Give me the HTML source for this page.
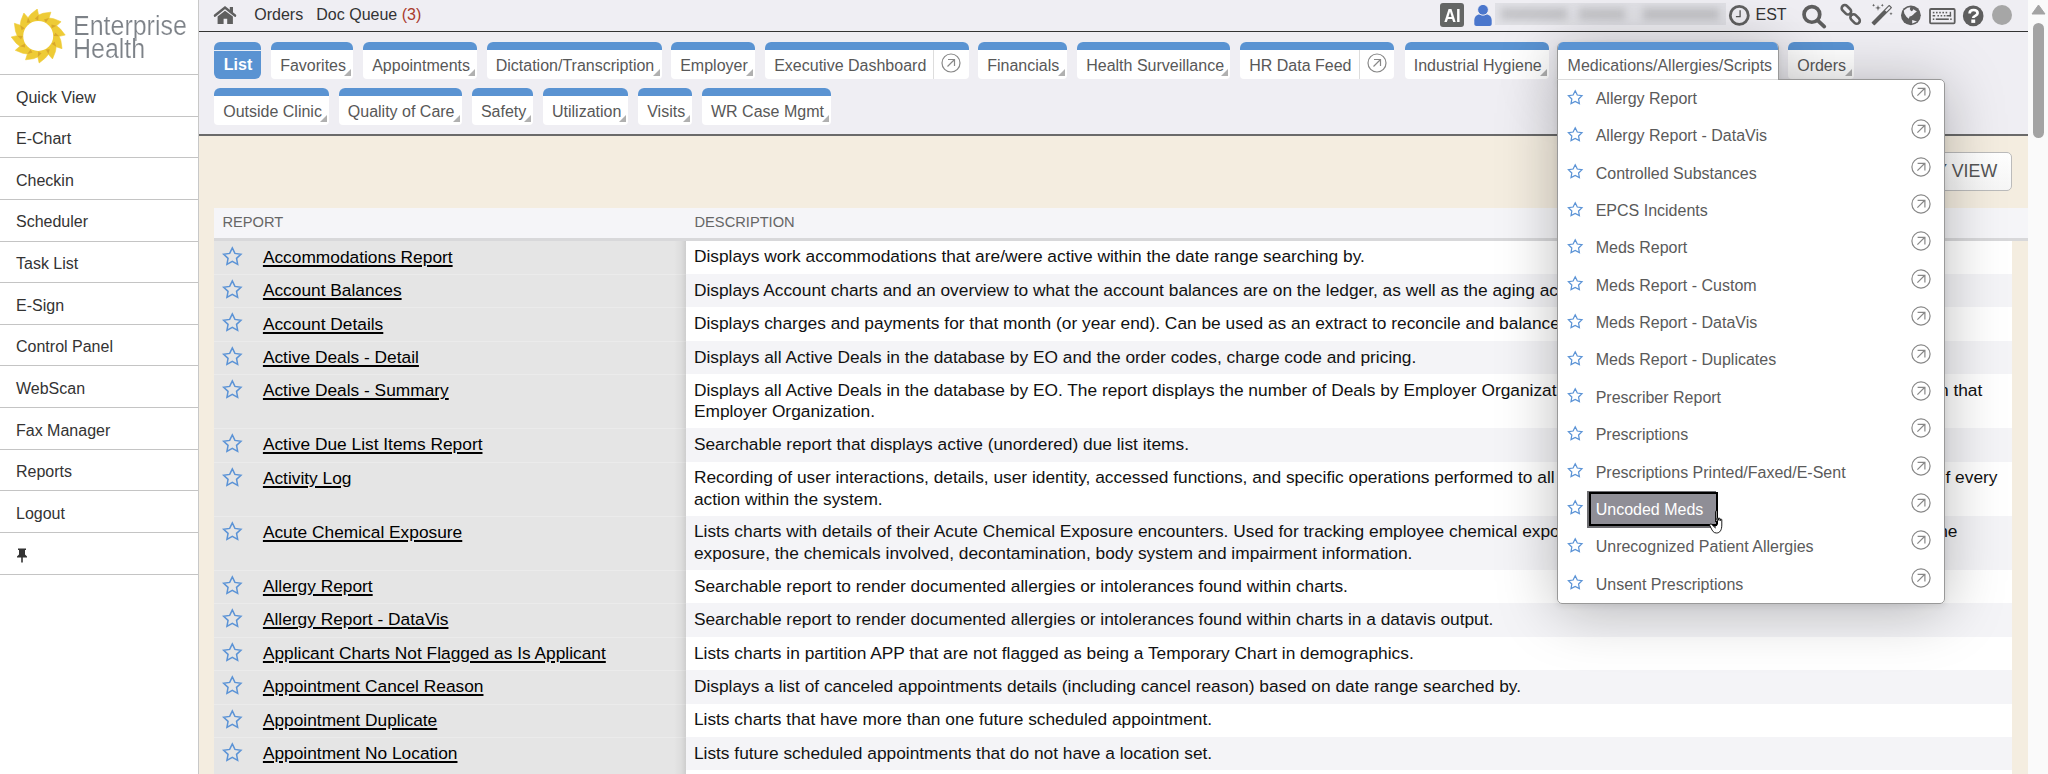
<!DOCTYPE html><html><head><meta charset="utf-8"><style>
*{box-sizing:border-box}
html,body{margin:0;padding:0}
body{width:2048px;height:774px;overflow:hidden;position:relative;font-family:"Liberation Sans", sans-serif;background:#f4ede0}
.a{position:absolute}
.t{position:absolute;white-space:nowrap;line-height:1}
</style></head><body><div class="a" style="left:199px;top:136px;width:1829px;height:638px;background:#f4ede0"></div>
<div class="a" style="left:199px;top:0;width:1829px;height:136px;background:#efeef3"></div>
<div class="a" style="left:199px;top:30.6px;width:1829px;height:1.8px;background:#333"></div>
<div class="a" style="left:199px;top:134.2px;width:1829px;height:1.5px;background:#6a6a6a"></div>
<div class="a" style="left:0;top:0;width:198px;height:774px;background:#fff"></div>
<div class="a" style="left:198px;top:0;width:1px;height:774px;background:#c8c8c8"></div>
<div class="a" style="left:0;top:74px;width:198px;height:1px;background:#c4c4c4"></div>
<div class="a" style="left:0;top:116px;width:198px;height:1px;background:#c4c4c4"></div>
<div class="a" style="left:0;top:157px;width:198px;height:1px;background:#c4c4c4"></div>
<div class="a" style="left:0;top:199px;width:198px;height:1px;background:#c4c4c4"></div>
<div class="a" style="left:0;top:241px;width:198px;height:1px;background:#c4c4c4"></div>
<div class="a" style="left:0;top:282px;width:198px;height:1px;background:#c4c4c4"></div>
<div class="a" style="left:0;top:324px;width:198px;height:1px;background:#c4c4c4"></div>
<div class="a" style="left:0;top:365px;width:198px;height:1px;background:#c4c4c4"></div>
<div class="a" style="left:0;top:407px;width:198px;height:1px;background:#c4c4c4"></div>
<div class="a" style="left:0;top:449px;width:198px;height:1px;background:#c4c4c4"></div>
<div class="a" style="left:0;top:490px;width:198px;height:1px;background:#c4c4c4"></div>
<div class="a" style="left:0;top:532px;width:198px;height:1px;background:#c4c4c4"></div>
<div class="a" style="left:0;top:574px;width:198px;height:1px;background:#c4c4c4"></div>
<div class="t" style="left:16px;top:89.56px;font-size:16px;color:#333;font-weight:400;">Quick View</div>
<div class="t" style="left:16px;top:131.20px;font-size:16px;color:#333;font-weight:400;">E-Chart</div>
<div class="t" style="left:16px;top:172.84px;font-size:16px;color:#333;font-weight:400;">Checkin</div>
<div class="t" style="left:16px;top:214.48px;font-size:16px;color:#333;font-weight:400;">Scheduler</div>
<div class="t" style="left:16px;top:256.12px;font-size:16px;color:#333;font-weight:400;">Task List</div>
<div class="t" style="left:16px;top:297.76px;font-size:16px;color:#333;font-weight:400;">E-Sign</div>
<div class="t" style="left:16px;top:339.40px;font-size:16px;color:#333;font-weight:400;">Control Panel</div>
<div class="t" style="left:16px;top:381.04px;font-size:16px;color:#333;font-weight:400;">WebScan</div>
<div class="t" style="left:16px;top:422.68px;font-size:16px;color:#333;font-weight:400;">Fax Manager</div>
<div class="t" style="left:16px;top:464.32px;font-size:16px;color:#333;font-weight:400;">Reports</div>
<div class="t" style="left:16px;top:505.96px;font-size:16px;color:#333;font-weight:400;">Logout</div>
<div class="a" style="left:214px;top:42px;width:47px;height:36.5px;background:#5a93d2;border-radius:6px"></div>
<div class="a" style="left:214px;top:50px;width:47px;height:1.3px;background:#e8eef6"></div>
<div class="t" style="left:223.8px;top:57.26px;font-size:16px;color:#fff;font-weight:700;">List</div>
<div class="a" style="left:271px;top:42px;width:82px;height:36.5px;background:#fff;border-radius:6px 6px 4px 4px;overflow:hidden"><div class="a" style="left:0;top:0;width:100%;height:8px;background:#5a93d2"></div></div>
<div class="t" style="left:280.2px;top:57.66px;font-size:16px;color:#585858;font-weight:400;">Favorites</div>
<svg class="a" style="left:344px;top:69px" width="7" height="7" viewBox="0 0 7 7"><path d="M7 0V7H0Z" fill="#b0b0b0"/></svg>
<div class="a" style="left:363px;top:42px;width:114px;height:36.5px;background:#fff;border-radius:6px 6px 4px 4px;overflow:hidden"><div class="a" style="left:0;top:0;width:100%;height:8px;background:#5a93d2"></div></div>
<div class="t" style="left:372.2px;top:57.66px;font-size:16px;color:#585858;font-weight:400;">Appointments</div>
<svg class="a" style="left:468px;top:69px" width="7" height="7" viewBox="0 0 7 7"><path d="M7 0V7H0Z" fill="#b0b0b0"/></svg>
<div class="a" style="left:486.5px;top:42px;width:175.5px;height:36.5px;background:#fff;border-radius:6px 6px 4px 4px;overflow:hidden"><div class="a" style="left:0;top:0;width:100%;height:8px;background:#5a93d2"></div></div>
<div class="t" style="left:495.7px;top:57.66px;font-size:16px;color:#585858;font-weight:400;">Dictation/Transcription</div>
<svg class="a" style="left:653.0px;top:69px" width="7" height="7" viewBox="0 0 7 7"><path d="M7 0V7H0Z" fill="#b0b0b0"/></svg>
<div class="a" style="left:671px;top:42px;width:83.6px;height:36.5px;background:#fff;border-radius:6px 6px 4px 4px;overflow:hidden"><div class="a" style="left:0;top:0;width:100%;height:8px;background:#5a93d2"></div></div>
<div class="t" style="left:680.2px;top:57.66px;font-size:16px;color:#585858;font-weight:400;">Employer</div>
<svg class="a" style="left:745.6px;top:69px" width="7" height="7" viewBox="0 0 7 7"><path d="M7 0V7H0Z" fill="#b0b0b0"/></svg>
<div class="a" style="left:765px;top:42px;width:204px;height:36.5px;background:#fff;border-radius:6px 6px 4px 4px;overflow:hidden"><div class="a" style="left:0;top:0;width:100%;height:8px;background:#5a93d2"></div></div>
<div class="t" style="left:774.2px;top:57.66px;font-size:16px;color:#585858;font-weight:400;">Executive Dashboard</div>
<div class="a" style="left:933px;top:50px;width:1px;height:28.5px;background:#ddd"></div>
<svg class="a" style="left:941px;top:53.3px" width="20" height="20" viewBox="0 0 20 20"><circle cx="10" cy="10" r="9" fill="none" stroke="#888" stroke-width="1.2"/><path d="M6.5 13.5L13.5 6.5M7 6.5H13.5V13" fill="none" stroke="#888" stroke-width="1.2"/></svg>
<div class="a" style="left:978px;top:42px;width:89px;height:36.5px;background:#fff;border-radius:6px 6px 4px 4px;overflow:hidden"><div class="a" style="left:0;top:0;width:100%;height:8px;background:#5a93d2"></div></div>
<div class="t" style="left:987.2px;top:57.66px;font-size:16px;color:#585858;font-weight:400;">Financials</div>
<svg class="a" style="left:1058px;top:69px" width="7" height="7" viewBox="0 0 7 7"><path d="M7 0V7H0Z" fill="#b0b0b0"/></svg>
<div class="a" style="left:1077px;top:42px;width:153px;height:36.5px;background:#fff;border-radius:6px 6px 4px 4px;overflow:hidden"><div class="a" style="left:0;top:0;width:100%;height:8px;background:#5a93d2"></div></div>
<div class="t" style="left:1086.2px;top:57.66px;font-size:16px;color:#585858;font-weight:400;">Health Surveillance</div>
<svg class="a" style="left:1221px;top:69px" width="7" height="7" viewBox="0 0 7 7"><path d="M7 0V7H0Z" fill="#b0b0b0"/></svg>
<div class="a" style="left:1240px;top:42px;width:154px;height:36.5px;background:#fff;border-radius:6px 6px 4px 4px;overflow:hidden"><div class="a" style="left:0;top:0;width:100%;height:8px;background:#5a93d2"></div></div>
<div class="t" style="left:1249.2px;top:57.66px;font-size:16px;color:#585858;font-weight:400;">HR Data Feed</div>
<div class="a" style="left:1359px;top:50px;width:1px;height:28.5px;background:#ddd"></div>
<svg class="a" style="left:1367px;top:53.3px" width="20" height="20" viewBox="0 0 20 20"><circle cx="10" cy="10" r="9" fill="none" stroke="#888" stroke-width="1.2"/><path d="M6.5 13.5L13.5 6.5M7 6.5H13.5V13" fill="none" stroke="#888" stroke-width="1.2"/></svg>
<div class="a" style="left:1404.5px;top:42px;width:144.5px;height:36.5px;background:#fff;border-radius:6px 6px 4px 4px;overflow:hidden"><div class="a" style="left:0;top:0;width:100%;height:8px;background:#5a93d2"></div></div>
<div class="t" style="left:1413.7px;top:57.66px;font-size:16px;color:#585858;font-weight:400;">Industrial Hygiene</div>
<svg class="a" style="left:1540.0px;top:69px" width="7" height="7" viewBox="0 0 7 7"><path d="M7 0V7H0Z" fill="#b0b0b0"/></svg>
<div class="a" style="left:1788px;top:42px;width:66px;height:36.5px;background:#fff;border-radius:6px 6px 4px 4px;overflow:hidden"><div class="a" style="left:0;top:0;width:100%;height:8px;background:#5a93d2"></div></div>
<div class="t" style="left:1797.2px;top:57.66px;font-size:16px;color:#585858;font-weight:400;">Orders</div>
<svg class="a" style="left:1845px;top:69px" width="7" height="7" viewBox="0 0 7 7"><path d="M7 0V7H0Z" fill="#b0b0b0"/></svg>
<div class="a" style="left:214px;top:88px;width:115px;height:36.5px;background:#fff;border-radius:6px 6px 4px 4px;overflow:hidden"><div class="a" style="left:0;top:0;width:100%;height:8px;background:#5a93d2"></div></div>
<div class="t" style="left:223.2px;top:103.66px;font-size:16px;color:#585858;font-weight:400;">Outside Clinic</div>
<svg class="a" style="left:320px;top:115px" width="7" height="7" viewBox="0 0 7 7"><path d="M7 0V7H0Z" fill="#b0b0b0"/></svg>
<div class="a" style="left:338.6px;top:88px;width:123.4px;height:36.5px;background:#fff;border-radius:6px 6px 4px 4px;overflow:hidden"><div class="a" style="left:0;top:0;width:100%;height:8px;background:#5a93d2"></div></div>
<div class="t" style="left:347.8px;top:103.66px;font-size:16px;color:#585858;font-weight:400;">Quality of Care</div>
<svg class="a" style="left:453.0px;top:115px" width="7" height="7" viewBox="0 0 7 7"><path d="M7 0V7H0Z" fill="#b0b0b0"/></svg>
<div class="a" style="left:471.7px;top:88px;width:61.2px;height:36.5px;background:#fff;border-radius:6px 6px 4px 4px;overflow:hidden"><div class="a" style="left:0;top:0;width:100%;height:8px;background:#5a93d2"></div></div>
<div class="t" style="left:480.9px;top:103.66px;font-size:16px;color:#585858;font-weight:400;">Safety</div>
<svg class="a" style="left:523.9px;top:115px" width="7" height="7" viewBox="0 0 7 7"><path d="M7 0V7H0Z" fill="#b0b0b0"/></svg>
<div class="a" style="left:542.8px;top:88px;width:85.2px;height:36.5px;background:#fff;border-radius:6px 6px 4px 4px;overflow:hidden"><div class="a" style="left:0;top:0;width:100%;height:8px;background:#5a93d2"></div></div>
<div class="t" style="left:552.0px;top:103.66px;font-size:16px;color:#585858;font-weight:400;">Utilization</div>
<svg class="a" style="left:619.0px;top:115px" width="7" height="7" viewBox="0 0 7 7"><path d="M7 0V7H0Z" fill="#b0b0b0"/></svg>
<div class="a" style="left:638px;top:88px;width:54px;height:36.5px;background:#fff;border-radius:6px 6px 4px 4px;overflow:hidden"><div class="a" style="left:0;top:0;width:100%;height:8px;background:#5a93d2"></div></div>
<div class="t" style="left:647.2px;top:103.66px;font-size:16px;color:#585858;font-weight:400;">Visits</div>
<svg class="a" style="left:683px;top:115px" width="7" height="7" viewBox="0 0 7 7"><path d="M7 0V7H0Z" fill="#b0b0b0"/></svg>
<div class="a" style="left:701.8px;top:88px;width:129.3px;height:36.5px;background:#fff;border-radius:6px 6px 4px 4px;overflow:hidden"><div class="a" style="left:0;top:0;width:100%;height:8px;background:#5a93d2"></div></div>
<div class="t" style="left:711.0px;top:103.66px;font-size:16px;color:#585858;font-weight:400;">WR Case Mgmt</div>
<svg class="a" style="left:822.0999999999999px;top:115px" width="7" height="7" viewBox="0 0 7 7"><path d="M7 0V7H0Z" fill="#b0b0b0"/></svg>
<svg class="a" style="left:208px;top:2px" width="34" height="28" viewBox="0 0 34 28"><path d="M7 13.6L17 5.6L27 13.6" fill="none" stroke="#5f5f5f" stroke-width="2.5" stroke-linecap="round" stroke-linejoin="miter"/><rect x="21.8" y="5" width="3.2" height="6" fill="#5f5f5f"/><path d="M9.6 14.6L17 8.8L24.9 14.6V21.9H19.2V16.8H15.6V21.9H9.6Z" fill="#5f5f5f"/></svg>
<div class="t" style="left:254.3px;top:7.46px;font-size:16px;color:#333;font-weight:400;">Orders</div>
<div class="t" style="left:316.3px;top:7.46px;font-size:16px;color:#333;font-weight:400;">Doc Queue <span style="color:#a93a2c">(3)</span></div>
<div class="a" style="left:1440px;top:3px;width:24.3px;height:24px;background:#646665;border-radius:3px"></div>
<div class="t" style="left:1443.6px;top:6.54px;font-size:18.5px;color:#fff;font-weight:700;transform:scaleX(0.9);transform-origin:0 0">AI</div>
<svg class="a" style="left:1474px;top:4px" width="18" height="23" viewBox="0 0 18 23"><path d="M0.3 20V16.5C0.3 12.8 2.8 10.5 5.5 10.5H12.5C15.2 10.5 17.7 12.8 17.7 16.5V20C17.7 21.3 16.8 22 15.6 22H2.4C1.2 22 0.3 21.3 0.3 20Z" fill="#4a76cc"/><circle cx="9" cy="5.8" r="5.4" fill="#4a76cc" stroke="#efeef3" stroke-width="1"/></svg>
<div class="a" style="left:1495px;top:3px;width:231px;height:22px;background:#e1e1e6;overflow:hidden"><div class="a" style="left:6px;top:5px;width:66px;height:12px;background:#c4c4c8;filter:blur(3.5px)"></div><div class="a" style="left:84px;top:5px;width:46px;height:12px;background:#c6c6ca;filter:blur(3.5px)"></div><div class="a" style="left:148px;top:5px;width:76px;height:12px;background:#c4c4c8;filter:blur(3.5px)"></div></div>
<svg class="a" style="left:1728px;top:4px" width="23" height="23" viewBox="0 0 23 23"><circle cx="11.3" cy="11.4" r="9" fill="none" stroke="#606060" stroke-width="2.8"/><path d="M12.1 6.3V12.6H7.9" fill="none" stroke="#555" stroke-width="1.3"/></svg>
<div class="t" style="left:1755.5px;top:7.26px;font-size:16px;color:#333;font-weight:400;">EST</div>
<svg class="a" style="left:1800px;top:2px" width="28" height="28" viewBox="0 0 28 28"><circle cx="11.9" cy="12.4" r="7.85" fill="none" stroke="#5e5e5e" stroke-width="3.7"/><path d="M18.2 18.8L24.3 24.6" stroke="#5e5e5e" stroke-width="3.7" stroke-linecap="round"/></svg>
<svg class="a" style="left:1838px;top:2px" width="26" height="26" viewBox="0 0 26 26"><g fill="none" stroke="#5e5e5e" stroke-width="2.6"><rect x="-5.4" y="-3.1" width="10.8" height="6.2" rx="3.1" transform="translate(8.4 7.8) rotate(45)"/><rect x="-5.4" y="-3.1" width="10.8" height="6.2" rx="3.1" transform="translate(17.1 17.0) rotate(45)"/></g><path d="M11.3 11.1L14.2 14" stroke="#5e5e5e" stroke-width="2.8"/></svg>
<svg class="a" style="left:1869px;top:2px" width="26" height="26" viewBox="0 0 26 26"><g transform="translate(12.8 13.1) rotate(-45)"><rect x="-12.6" y="-2.1" width="25.2" height="4.2" rx="0.5" fill="#5e5e5e"/><rect x="5.6" y="-1" width="5.8" height="2" fill="#efeef3"/></g><path d="M9 2.9000000000000004L9.7 5.2L12.0 5.9L9.7 6.6000000000000005L9 8.9L8.3 6.6000000000000005L6.0 5.9L8.3 5.2ZM4.6 1.7000000000000002L5.05 2.75L6.1 3.2L5.05 3.6500000000000004L4.6 4.7L4.1499999999999995 3.6500000000000004L3.0999999999999996 3.2L4.1499999999999995 2.75ZM13.3 1.7000000000000002L13.75 2.75L14.8 3.2L13.75 3.6500000000000004L13.3 4.7L12.850000000000001 3.6500000000000004L11.8 3.2L12.850000000000001 2.75ZM22 10.1L22.45 11.25L23.6 11.7L22.45 12.149999999999999L22 13.299999999999999L21.55 12.149999999999999L20.4 11.7L21.55 11.25Z" fill="#5e5e5e"/></svg>
<svg class="a" style="left:1898px;top:3px" width="26" height="26" viewBox="0 0 26 26"><circle cx="12.9" cy="12.3" r="9.9" fill="#5e5e5e"/><path d="M5.8 7.4L9.5 4.8L12.3 4.3L11.8 6.2L14 8.1L15.4 6.3L18.9 8.4L16.8 10.1L15.1 11.7L13.4 12.9L11.6 13.4L10.8 15.8L8.6 13.9L6.3 10.6Z" fill="#efeef3"/><path d="M12 6.4L13.9 6.2L14.6 7.8L13.2 8.2Z" fill="#5e5e5e"/><path d="M14.2 17.1L19 18.4L14.2 20.6Z" fill="#efeef3"/></svg>
<svg class="a" style="left:1929px;top:8px" width="27" height="17" viewBox="0 0 27 17"><rect x="1" y="1" width="24.7" height="14.3" rx="1" fill="none" stroke="#5e5e5e" stroke-width="1.8"/><g fill="#5e5e5e"><rect x="3.8" y="3.8" width="1.6" height="1.6"/><rect x="7" y="3.8" width="1.6" height="1.6"/><rect x="10.2" y="3.8" width="1.6" height="1.6"/><rect x="13.4" y="3.8" width="1.6" height="1.6"/><rect x="16.6" y="3.8" width="1.6" height="1.6"/><rect x="20.7" y="3.8" width="1.4" height="4.6"/><rect x="3.6" y="7" width="2.6" height="1.5"/><rect x="8.4" y="7" width="1.6" height="1.5"/><rect x="11.6" y="7" width="1.6" height="1.5"/><rect x="14.8" y="7" width="1.6" height="1.5"/><rect x="17.6" y="7" width="4.5" height="1.5"/><rect x="3.8" y="10.4" width="1.5" height="1.6"/><rect x="6.8" y="10.4" width="13" height="1.6"/><rect x="21.2" y="10.4" width="1.5" height="1.6"/></g></svg>
<svg class="a" style="left:1962px;top:4.5px" width="22" height="22" viewBox="0 0 22 22"><circle cx="11.2" cy="10.9" r="10.3" fill="#5e5e5e"/><path d="M7.6 8.5C7.6 6 9.5 5 11.6 5C13.8 5 15.6 6.2 15.6 8.3C15.6 10.7 11.2 10.9 11.2 12.9V13.1" fill="none" stroke="#fff" stroke-width="2.7"/><rect x="9.3" y="14.5" width="3.9" height="3.4" fill="#fff"/></svg>
<div class="a" style="left:1991.7px;top:5.2px;width:20.2px;height:20.2px;border-radius:50%;background:#a6a6a6"></div>
<div class="a" style="left:1880px;top:152px;width:132px;height:38.5px;border:1px solid #bbb;border-radius:5px;background:linear-gradient(#fff,#f6f6f6)"></div>
<div class="t" style="right:50.8px;top:162.6px;font-size:17.8px;color:#555">MY VIEW</div>
<div class="a" style="left:214px;top:208px;width:1814px;height:30px;background:#f5f5f8"></div>
<div class="a" style="left:214px;top:237.8px;width:1814px;height:2.8px;background:#d8d8da"></div>
<div class="t" style="left:222.4px;top:215.28px;font-size:14.67px;color:#666;font-weight:400;">REPORT</div>
<div class="t" style="left:694.5px;top:215.28px;font-size:14.67px;color:#666;font-weight:400;">DESCRIPTION</div>
<div class="a" style="left:214px;top:240.6px;width:472px;height:534px;background:#e5e5e5"></div>
<div class="a" style="left:686px;top:240.6px;width:1326px;height:534px;background:#fff"></div>
<svg class="a" style="left:219.5px;top:242.60px" width="26" height="24" viewBox="0 0 26 24"><path d="M12.30 4.90L14.92 10.39L20.95 11.19L16.54 15.38L17.65 21.36L12.30 18.46L6.95 21.36L8.06 15.38L3.65 11.19L9.68 10.39Z" fill="none" stroke="#5b93d6" stroke-width="1.5" stroke-linejoin="miter" stroke-miterlimit="10"/></svg>
<div class="t" style="left:262.9px;top:248.73px;font-size:17.33px;color:#000;font-weight:400;text-decoration:underline;text-decoration-thickness:1.6px;text-underline-offset:1.6px">Accommodations Report</div>
<div class="t" style="left:693.9px;top:248.43px;font-size:17.33px;color:#111;font-weight:400;">Displays work accommodations that are/were active within the date range searching by.</div>
<div class="a" style="left:214px;top:274px;width:472px;height:1px;background:#ebebeb"></div>
<div class="a" style="left:686px;top:274.02px;width:1326px;height:33.42px;background:#f4f4f7"></div>
<svg class="a" style="left:219.5px;top:276.02px" width="26" height="24" viewBox="0 0 26 24"><path d="M12.30 4.90L14.92 10.39L20.95 11.19L16.54 15.38L17.65 21.36L12.30 18.46L6.95 21.36L8.06 15.38L3.65 11.19L9.68 10.39Z" fill="none" stroke="#5b93d6" stroke-width="1.5" stroke-linejoin="miter" stroke-miterlimit="10"/></svg>
<div class="t" style="left:262.9px;top:282.15px;font-size:17.33px;color:#000;font-weight:400;text-decoration:underline;text-decoration-thickness:1.6px;text-underline-offset:1.6px">Account Balances</div>
<div class="t" style="left:693.9px;top:281.85px;font-size:17.33px;color:#111;font-weight:400;">Displays Account charts and an overview to what the account balances are on the ledger, as well as the aging account</div>
<div class="a" style="left:214px;top:307px;width:472px;height:1px;background:#ebebeb"></div>
<svg class="a" style="left:219.5px;top:309.44px" width="26" height="24" viewBox="0 0 26 24"><path d="M12.30 4.90L14.92 10.39L20.95 11.19L16.54 15.38L17.65 21.36L12.30 18.46L6.95 21.36L8.06 15.38L3.65 11.19L9.68 10.39Z" fill="none" stroke="#5b93d6" stroke-width="1.5" stroke-linejoin="miter" stroke-miterlimit="10"/></svg>
<div class="t" style="left:262.9px;top:315.57px;font-size:17.33px;color:#000;font-weight:400;text-decoration:underline;text-decoration-thickness:1.6px;text-underline-offset:1.6px">Account Details</div>
<div class="t" style="left:693.9px;top:315.27px;font-size:17.33px;color:#111;font-weight:400;">Displays charges and payments for that month (or year end). Can be used as an extract to reconcile and balance the</div>
<div class="a" style="left:214px;top:341px;width:472px;height:1px;background:#ebebeb"></div>
<div class="a" style="left:686px;top:340.86px;width:1326px;height:33.42px;background:#f4f4f7"></div>
<svg class="a" style="left:219.5px;top:342.86px" width="26" height="24" viewBox="0 0 26 24"><path d="M12.30 4.90L14.92 10.39L20.95 11.19L16.54 15.38L17.65 21.36L12.30 18.46L6.95 21.36L8.06 15.38L3.65 11.19L9.68 10.39Z" fill="none" stroke="#5b93d6" stroke-width="1.5" stroke-linejoin="miter" stroke-miterlimit="10"/></svg>
<div class="t" style="left:262.9px;top:348.99px;font-size:17.33px;color:#000;font-weight:400;text-decoration:underline;text-decoration-thickness:1.6px;text-underline-offset:1.6px">Active Deals - Detail</div>
<div class="t" style="left:693.9px;top:348.69px;font-size:17.33px;color:#111;font-weight:400;">Displays all Active Deals in the database by EO and the order codes, charge code and pricing.</div>
<div class="a" style="left:214px;top:374px;width:472px;height:1px;background:#ebebeb"></div>
<svg class="a" style="left:219.5px;top:376.28px" width="26" height="24" viewBox="0 0 26 24"><path d="M12.30 4.90L14.92 10.39L20.95 11.19L16.54 15.38L17.65 21.36L12.30 18.46L6.95 21.36L8.06 15.38L3.65 11.19L9.68 10.39Z" fill="none" stroke="#5b93d6" stroke-width="1.5" stroke-linejoin="miter" stroke-miterlimit="10"/></svg>
<div class="t" style="left:262.9px;top:382.41px;font-size:17.33px;color:#000;font-weight:400;text-decoration:underline;text-decoration-thickness:1.6px;text-underline-offset:1.6px">Active Deals - Summary</div>
<div class="t" style="left:693.9px;top:381.51px;font-size:17.33px;color:#111;font-weight:400;">Displays all Active Deals in the database by EO. The report displays the number of Deals by Employer Organization</div>
<div class="t" style="left:693.9px;top:403.21px;font-size:17.33px;color:#111;font-weight:400;">Employer Organization.</div>
<div class="t" style="right:65.70000000000005px;top:381.51px;font-size:17.33px;color:#111">n that</div>
<div class="a" style="left:214px;top:428px;width:472px;height:1px;background:#ebebeb"></div>
<div class="a" style="left:686px;top:428.33px;width:1326px;height:33.42px;background:#f4f4f7"></div>
<svg class="a" style="left:219.5px;top:430.33px" width="26" height="24" viewBox="0 0 26 24"><path d="M12.30 4.90L14.92 10.39L20.95 11.19L16.54 15.38L17.65 21.36L12.30 18.46L6.95 21.36L8.06 15.38L3.65 11.19L9.68 10.39Z" fill="none" stroke="#5b93d6" stroke-width="1.5" stroke-linejoin="miter" stroke-miterlimit="10"/></svg>
<div class="t" style="left:262.9px;top:436.46px;font-size:17.33px;color:#000;font-weight:400;text-decoration:underline;text-decoration-thickness:1.6px;text-underline-offset:1.6px">Active Due List Items Report</div>
<div class="t" style="left:693.9px;top:436.16px;font-size:17.33px;color:#111;font-weight:400;">Searchable report that displays active (unordered) due list items.</div>
<div class="a" style="left:214px;top:462px;width:472px;height:1px;background:#ebebeb"></div>
<svg class="a" style="left:219.5px;top:463.75px" width="26" height="24" viewBox="0 0 26 24"><path d="M12.30 4.90L14.92 10.39L20.95 11.19L16.54 15.38L17.65 21.36L12.30 18.46L6.95 21.36L8.06 15.38L3.65 11.19L9.68 10.39Z" fill="none" stroke="#5b93d6" stroke-width="1.5" stroke-linejoin="miter" stroke-miterlimit="10"/></svg>
<div class="t" style="left:262.9px;top:469.88px;font-size:17.33px;color:#000;font-weight:400;text-decoration:underline;text-decoration-thickness:1.6px;text-underline-offset:1.6px">Activity Log</div>
<div class="t" style="left:693.9px;top:468.98px;font-size:17.33px;color:#111;font-weight:400;">Recording of user interactions, details, user identity, accessed functions, and specific operations performed to all</div>
<div class="t" style="left:693.9px;top:490.68px;font-size:17.33px;color:#111;font-weight:400;">action within the system.</div>
<div class="t" style="right:50.5px;top:468.98px;font-size:17.33px;color:#111">f every</div>
<div class="a" style="left:214px;top:516px;width:472px;height:1px;background:#ebebeb"></div>
<div class="a" style="left:686px;top:515.80px;width:1326px;height:54.05px;background:#f4f4f7"></div>
<svg class="a" style="left:219.5px;top:517.80px" width="26" height="24" viewBox="0 0 26 24"><path d="M12.30 4.90L14.92 10.39L20.95 11.19L16.54 15.38L17.65 21.36L12.30 18.46L6.95 21.36L8.06 15.38L3.65 11.19L9.68 10.39Z" fill="none" stroke="#5b93d6" stroke-width="1.5" stroke-linejoin="miter" stroke-miterlimit="10"/></svg>
<div class="t" style="left:262.9px;top:523.93px;font-size:17.33px;color:#000;font-weight:400;text-decoration:underline;text-decoration-thickness:1.6px;text-underline-offset:1.6px">Acute Chemical Exposure</div>
<div class="t" style="left:693.9px;top:523.03px;font-size:17.33px;color:#111;font-weight:400;">Lists charts with details of their Acute Chemical Exposure encounters. Used for tracking employee chemical exposure</div>
<div class="t" style="left:693.9px;top:544.73px;font-size:17.33px;color:#111;font-weight:400;">exposure, the chemicals involved, decontamination, body system and impairment information.</div>
<div class="t" style="right:90.5px;top:523.03px;font-size:17.33px;color:#111">ne</div>
<div class="a" style="left:214px;top:570px;width:472px;height:1px;background:#ebebeb"></div>
<svg class="a" style="left:219.5px;top:571.85px" width="26" height="24" viewBox="0 0 26 24"><path d="M12.30 4.90L14.92 10.39L20.95 11.19L16.54 15.38L17.65 21.36L12.30 18.46L6.95 21.36L8.06 15.38L3.65 11.19L9.68 10.39Z" fill="none" stroke="#5b93d6" stroke-width="1.5" stroke-linejoin="miter" stroke-miterlimit="10"/></svg>
<div class="t" style="left:262.9px;top:577.98px;font-size:17.33px;color:#000;font-weight:400;text-decoration:underline;text-decoration-thickness:1.6px;text-underline-offset:1.6px">Allergy Report</div>
<div class="t" style="left:693.9px;top:577.68px;font-size:17.33px;color:#111;font-weight:400;">Searchable report to render documented allergies or intolerances found within charts.</div>
<div class="a" style="left:214px;top:603px;width:472px;height:1px;background:#ebebeb"></div>
<div class="a" style="left:686px;top:603.27px;width:1326px;height:33.42px;background:#f4f4f7"></div>
<svg class="a" style="left:219.5px;top:605.27px" width="26" height="24" viewBox="0 0 26 24"><path d="M12.30 4.90L14.92 10.39L20.95 11.19L16.54 15.38L17.65 21.36L12.30 18.46L6.95 21.36L8.06 15.38L3.65 11.19L9.68 10.39Z" fill="none" stroke="#5b93d6" stroke-width="1.5" stroke-linejoin="miter" stroke-miterlimit="10"/></svg>
<div class="t" style="left:262.9px;top:611.40px;font-size:17.33px;color:#000;font-weight:400;text-decoration:underline;text-decoration-thickness:1.6px;text-underline-offset:1.6px">Allergy Report - DataVis</div>
<div class="t" style="left:693.9px;top:611.10px;font-size:17.33px;color:#111;font-weight:400;">Searchable report to render documented allergies or intolerances found within charts in a datavis output.</div>
<div class="a" style="left:214px;top:637px;width:472px;height:1px;background:#ebebeb"></div>
<svg class="a" style="left:219.5px;top:638.69px" width="26" height="24" viewBox="0 0 26 24"><path d="M12.30 4.90L14.92 10.39L20.95 11.19L16.54 15.38L17.65 21.36L12.30 18.46L6.95 21.36L8.06 15.38L3.65 11.19L9.68 10.39Z" fill="none" stroke="#5b93d6" stroke-width="1.5" stroke-linejoin="miter" stroke-miterlimit="10"/></svg>
<div class="t" style="left:262.9px;top:644.82px;font-size:17.33px;color:#000;font-weight:400;text-decoration:underline;text-decoration-thickness:1.6px;text-underline-offset:1.6px">Applicant Charts Not Flagged as Is Applicant</div>
<div class="t" style="left:693.9px;top:644.52px;font-size:17.33px;color:#111;font-weight:400;">Lists charts in partition APP that are not flagged as being a Temporary Chart in demographics.</div>
<div class="a" style="left:214px;top:670px;width:472px;height:1px;background:#ebebeb"></div>
<div class="a" style="left:686px;top:670.11px;width:1326px;height:33.42px;background:#f4f4f7"></div>
<svg class="a" style="left:219.5px;top:672.11px" width="26" height="24" viewBox="0 0 26 24"><path d="M12.30 4.90L14.92 10.39L20.95 11.19L16.54 15.38L17.65 21.36L12.30 18.46L6.95 21.36L8.06 15.38L3.65 11.19L9.68 10.39Z" fill="none" stroke="#5b93d6" stroke-width="1.5" stroke-linejoin="miter" stroke-miterlimit="10"/></svg>
<div class="t" style="left:262.9px;top:678.24px;font-size:17.33px;color:#000;font-weight:400;text-decoration:underline;text-decoration-thickness:1.6px;text-underline-offset:1.6px">Appointment Cancel Reason</div>
<div class="t" style="left:693.9px;top:677.94px;font-size:17.33px;color:#111;font-weight:400;">Displays a list of canceled appointments details (including cancel reason) based on date range searched by.</div>
<div class="a" style="left:214px;top:704px;width:472px;height:1px;background:#ebebeb"></div>
<svg class="a" style="left:219.5px;top:705.53px" width="26" height="24" viewBox="0 0 26 24"><path d="M12.30 4.90L14.92 10.39L20.95 11.19L16.54 15.38L17.65 21.36L12.30 18.46L6.95 21.36L8.06 15.38L3.65 11.19L9.68 10.39Z" fill="none" stroke="#5b93d6" stroke-width="1.5" stroke-linejoin="miter" stroke-miterlimit="10"/></svg>
<div class="t" style="left:262.9px;top:711.66px;font-size:17.33px;color:#000;font-weight:400;text-decoration:underline;text-decoration-thickness:1.6px;text-underline-offset:1.6px">Appointment Duplicate</div>
<div class="t" style="left:693.9px;top:711.36px;font-size:17.33px;color:#111;font-weight:400;">Lists charts that have more than one future scheduled appointment.</div>
<div class="a" style="left:214px;top:737px;width:472px;height:1px;background:#ebebeb"></div>
<div class="a" style="left:686px;top:736.95px;width:1326px;height:33.42px;background:#f4f4f7"></div>
<svg class="a" style="left:219.5px;top:738.95px" width="26" height="24" viewBox="0 0 26 24"><path d="M12.30 4.90L14.92 10.39L20.95 11.19L16.54 15.38L17.65 21.36L12.30 18.46L6.95 21.36L8.06 15.38L3.65 11.19L9.68 10.39Z" fill="none" stroke="#5b93d6" stroke-width="1.5" stroke-linejoin="miter" stroke-miterlimit="10"/></svg>
<div class="t" style="left:262.9px;top:745.08px;font-size:17.33px;color:#000;font-weight:400;text-decoration:underline;text-decoration-thickness:1.6px;text-underline-offset:1.6px">Appointment No Location</div>
<div class="t" style="left:693.9px;top:744.78px;font-size:17.33px;color:#111;font-weight:400;">Lists future scheduled appointments that do not have a location set.</div>
<div class="a" style="left:674px;top:240.6px;width:12px;height:534px;background:linear-gradient(90deg,rgba(0,0,0,0),rgba(0,0,0,0.035) 60%,rgba(0,0,0,0.1))"></div>
<div class="a" style="left:1557px;top:41.8px;width:222px;height:40px;border-radius:6px 6px 0 0;box-shadow:0 2px 6px rgba(0,0,0,0.08), 0 6px 60px rgba(0,0,0,0.27)"></div>
<div class="a" style="left:1557px;top:79px;width:388px;height:524.5px;border-radius:0 5px 5px 5px;box-shadow:0 2px 6px rgba(0,0,0,0.08), 0 6px 60px rgba(0,0,0,0.27)"></div>
<div class="a" style="left:1557px;top:79px;width:388px;height:524.5px;background:#fff;border:1px solid #999;border-radius:0 5px 5px 5px"></div>
<div class="a" style="left:1557px;top:41.8px;width:222px;height:37.5px;background:#fff;border-radius:6px 6px 0 0;border-left:1px solid #999;border-right:1px solid #999;overflow:hidden"><div class="a" style="left:0;top:0;width:100%;height:7.8px;background:#5a93d2"></div></div>
<div class="a" style="left:1558px;top:79px;width:220px;height:1px;background:#dcdcdc"></div>
<div class="t" style="left:1567.6px;top:57.66px;font-size:16px;color:#5a5a5a;font-weight:400;">Medications/Allergies/Scripts</div>
<svg class="a" style="left:1565.3px;top:87.50px" width="20" height="20" viewBox="0 0 20 20"><path d="M10.20 2.80L12.29 7.03L16.95 7.71L13.58 11.00L14.37 15.64L10.20 13.45L6.03 15.64L6.82 11.00L3.45 7.71L8.11 7.03Z" fill="none" stroke="#5b93d6" stroke-width="1.25" stroke-miterlimit="10"/></svg>
<svg class="a" style="left:1910.6px;top:82.00px" width="20" height="20" viewBox="0 0 20 20"><circle cx="10" cy="10" r="9.1" fill="none" stroke="#888" stroke-width="1.2"/><path d="M6.4 13.6L13.8 6.3M6.6 6.3H13.9V13.5" fill="none" stroke="#888" stroke-width="1.2"/></svg>
<div class="t" style="left:1595.7px;top:90.96px;font-size:16px;color:#5a5a5a;font-weight:400;">Allergy Report</div>
<svg class="a" style="left:1565.3px;top:124.86px" width="20" height="20" viewBox="0 0 20 20"><path d="M10.20 2.80L12.29 7.03L16.95 7.71L13.58 11.00L14.37 15.64L10.20 13.45L6.03 15.64L6.82 11.00L3.45 7.71L8.11 7.03Z" fill="none" stroke="#5b93d6" stroke-width="1.25" stroke-miterlimit="10"/></svg>
<svg class="a" style="left:1910.6px;top:119.36px" width="20" height="20" viewBox="0 0 20 20"><circle cx="10" cy="10" r="9.1" fill="none" stroke="#888" stroke-width="1.2"/><path d="M6.4 13.6L13.8 6.3M6.6 6.3H13.9V13.5" fill="none" stroke="#888" stroke-width="1.2"/></svg>
<div class="t" style="left:1595.7px;top:128.32px;font-size:16px;color:#5a5a5a;font-weight:400;">Allergy Report - DataVis</div>
<svg class="a" style="left:1565.3px;top:162.22px" width="20" height="20" viewBox="0 0 20 20"><path d="M10.20 2.80L12.29 7.03L16.95 7.71L13.58 11.00L14.37 15.64L10.20 13.45L6.03 15.64L6.82 11.00L3.45 7.71L8.11 7.03Z" fill="none" stroke="#5b93d6" stroke-width="1.25" stroke-miterlimit="10"/></svg>
<svg class="a" style="left:1910.6px;top:156.72px" width="20" height="20" viewBox="0 0 20 20"><circle cx="10" cy="10" r="9.1" fill="none" stroke="#888" stroke-width="1.2"/><path d="M6.4 13.6L13.8 6.3M6.6 6.3H13.9V13.5" fill="none" stroke="#888" stroke-width="1.2"/></svg>
<div class="t" style="left:1595.7px;top:165.68px;font-size:16px;color:#5a5a5a;font-weight:400;">Controlled Substances</div>
<svg class="a" style="left:1565.3px;top:199.58px" width="20" height="20" viewBox="0 0 20 20"><path d="M10.20 2.80L12.29 7.03L16.95 7.71L13.58 11.00L14.37 15.64L10.20 13.45L6.03 15.64L6.82 11.00L3.45 7.71L8.11 7.03Z" fill="none" stroke="#5b93d6" stroke-width="1.25" stroke-miterlimit="10"/></svg>
<svg class="a" style="left:1910.6px;top:194.08px" width="20" height="20" viewBox="0 0 20 20"><circle cx="10" cy="10" r="9.1" fill="none" stroke="#888" stroke-width="1.2"/><path d="M6.4 13.6L13.8 6.3M6.6 6.3H13.9V13.5" fill="none" stroke="#888" stroke-width="1.2"/></svg>
<div class="t" style="left:1595.7px;top:203.04px;font-size:16px;color:#5a5a5a;font-weight:400;">EPCS Incidents</div>
<svg class="a" style="left:1565.3px;top:236.94px" width="20" height="20" viewBox="0 0 20 20"><path d="M10.20 2.80L12.29 7.03L16.95 7.71L13.58 11.00L14.37 15.64L10.20 13.45L6.03 15.64L6.82 11.00L3.45 7.71L8.11 7.03Z" fill="none" stroke="#5b93d6" stroke-width="1.25" stroke-miterlimit="10"/></svg>
<svg class="a" style="left:1910.6px;top:231.44px" width="20" height="20" viewBox="0 0 20 20"><circle cx="10" cy="10" r="9.1" fill="none" stroke="#888" stroke-width="1.2"/><path d="M6.4 13.6L13.8 6.3M6.6 6.3H13.9V13.5" fill="none" stroke="#888" stroke-width="1.2"/></svg>
<div class="t" style="left:1595.7px;top:240.40px;font-size:16px;color:#5a5a5a;font-weight:400;">Meds Report</div>
<svg class="a" style="left:1565.3px;top:274.30px" width="20" height="20" viewBox="0 0 20 20"><path d="M10.20 2.80L12.29 7.03L16.95 7.71L13.58 11.00L14.37 15.64L10.20 13.45L6.03 15.64L6.82 11.00L3.45 7.71L8.11 7.03Z" fill="none" stroke="#5b93d6" stroke-width="1.25" stroke-miterlimit="10"/></svg>
<svg class="a" style="left:1910.6px;top:268.80px" width="20" height="20" viewBox="0 0 20 20"><circle cx="10" cy="10" r="9.1" fill="none" stroke="#888" stroke-width="1.2"/><path d="M6.4 13.6L13.8 6.3M6.6 6.3H13.9V13.5" fill="none" stroke="#888" stroke-width="1.2"/></svg>
<div class="t" style="left:1595.7px;top:277.76px;font-size:16px;color:#5a5a5a;font-weight:400;">Meds Report - Custom</div>
<svg class="a" style="left:1565.3px;top:311.66px" width="20" height="20" viewBox="0 0 20 20"><path d="M10.20 2.80L12.29 7.03L16.95 7.71L13.58 11.00L14.37 15.64L10.20 13.45L6.03 15.64L6.82 11.00L3.45 7.71L8.11 7.03Z" fill="none" stroke="#5b93d6" stroke-width="1.25" stroke-miterlimit="10"/></svg>
<svg class="a" style="left:1910.6px;top:306.16px" width="20" height="20" viewBox="0 0 20 20"><circle cx="10" cy="10" r="9.1" fill="none" stroke="#888" stroke-width="1.2"/><path d="M6.4 13.6L13.8 6.3M6.6 6.3H13.9V13.5" fill="none" stroke="#888" stroke-width="1.2"/></svg>
<div class="t" style="left:1595.7px;top:315.12px;font-size:16px;color:#5a5a5a;font-weight:400;">Meds Report - DataVis</div>
<svg class="a" style="left:1565.3px;top:349.02px" width="20" height="20" viewBox="0 0 20 20"><path d="M10.20 2.80L12.29 7.03L16.95 7.71L13.58 11.00L14.37 15.64L10.20 13.45L6.03 15.64L6.82 11.00L3.45 7.71L8.11 7.03Z" fill="none" stroke="#5b93d6" stroke-width="1.25" stroke-miterlimit="10"/></svg>
<svg class="a" style="left:1910.6px;top:343.52px" width="20" height="20" viewBox="0 0 20 20"><circle cx="10" cy="10" r="9.1" fill="none" stroke="#888" stroke-width="1.2"/><path d="M6.4 13.6L13.8 6.3M6.6 6.3H13.9V13.5" fill="none" stroke="#888" stroke-width="1.2"/></svg>
<div class="t" style="left:1595.7px;top:352.48px;font-size:16px;color:#5a5a5a;font-weight:400;">Meds Report - Duplicates</div>
<svg class="a" style="left:1565.3px;top:386.38px" width="20" height="20" viewBox="0 0 20 20"><path d="M10.20 2.80L12.29 7.03L16.95 7.71L13.58 11.00L14.37 15.64L10.20 13.45L6.03 15.64L6.82 11.00L3.45 7.71L8.11 7.03Z" fill="none" stroke="#5b93d6" stroke-width="1.25" stroke-miterlimit="10"/></svg>
<svg class="a" style="left:1910.6px;top:380.88px" width="20" height="20" viewBox="0 0 20 20"><circle cx="10" cy="10" r="9.1" fill="none" stroke="#888" stroke-width="1.2"/><path d="M6.4 13.6L13.8 6.3M6.6 6.3H13.9V13.5" fill="none" stroke="#888" stroke-width="1.2"/></svg>
<div class="t" style="left:1595.7px;top:389.84px;font-size:16px;color:#5a5a5a;font-weight:400;">Prescriber Report</div>
<svg class="a" style="left:1565.3px;top:423.74px" width="20" height="20" viewBox="0 0 20 20"><path d="M10.20 2.80L12.29 7.03L16.95 7.71L13.58 11.00L14.37 15.64L10.20 13.45L6.03 15.64L6.82 11.00L3.45 7.71L8.11 7.03Z" fill="none" stroke="#5b93d6" stroke-width="1.25" stroke-miterlimit="10"/></svg>
<svg class="a" style="left:1910.6px;top:418.24px" width="20" height="20" viewBox="0 0 20 20"><circle cx="10" cy="10" r="9.1" fill="none" stroke="#888" stroke-width="1.2"/><path d="M6.4 13.6L13.8 6.3M6.6 6.3H13.9V13.5" fill="none" stroke="#888" stroke-width="1.2"/></svg>
<div class="t" style="left:1595.7px;top:427.20px;font-size:16px;color:#5a5a5a;font-weight:400;">Prescriptions</div>
<svg class="a" style="left:1565.3px;top:461.10px" width="20" height="20" viewBox="0 0 20 20"><path d="M10.20 2.80L12.29 7.03L16.95 7.71L13.58 11.00L14.37 15.64L10.20 13.45L6.03 15.64L6.82 11.00L3.45 7.71L8.11 7.03Z" fill="none" stroke="#5b93d6" stroke-width="1.25" stroke-miterlimit="10"/></svg>
<svg class="a" style="left:1910.6px;top:455.60px" width="20" height="20" viewBox="0 0 20 20"><circle cx="10" cy="10" r="9.1" fill="none" stroke="#888" stroke-width="1.2"/><path d="M6.4 13.6L13.8 6.3M6.6 6.3H13.9V13.5" fill="none" stroke="#888" stroke-width="1.2"/></svg>
<div class="t" style="left:1595.7px;top:464.56px;font-size:16px;color:#5a5a5a;font-weight:400;">Prescriptions Printed/Faxed/E-Sent</div>
<svg class="a" style="left:1565.3px;top:498.46px" width="20" height="20" viewBox="0 0 20 20"><path d="M10.20 2.80L12.29 7.03L16.95 7.71L13.58 11.00L14.37 15.64L10.20 13.45L6.03 15.64L6.82 11.00L3.45 7.71L8.11 7.03Z" fill="none" stroke="#5b93d6" stroke-width="1.25" stroke-miterlimit="10"/></svg>
<svg class="a" style="left:1910.6px;top:492.96px" width="20" height="20" viewBox="0 0 20 20"><circle cx="10" cy="10" r="9.1" fill="none" stroke="#888" stroke-width="1.2"/><path d="M6.4 13.6L13.8 6.3M6.6 6.3H13.9V13.5" fill="none" stroke="#888" stroke-width="1.2"/></svg>
<div class="a" style="left:1587.2px;top:491.1px;width:129px;height:36.5px;background:#6e6e72"></div>
<div class="a" style="left:1589px;top:491.9px;width:129px;height:33.7px;border:2.2px solid #000;background:#8f8e96"></div>
<div class="t" style="left:1595.7px;top:501.92px;font-size:16px;color:#fff;font-weight:400;">Uncoded Meds</div>
<svg class="a" style="left:1565.3px;top:535.82px" width="20" height="20" viewBox="0 0 20 20"><path d="M10.20 2.80L12.29 7.03L16.95 7.71L13.58 11.00L14.37 15.64L10.20 13.45L6.03 15.64L6.82 11.00L3.45 7.71L8.11 7.03Z" fill="none" stroke="#5b93d6" stroke-width="1.25" stroke-miterlimit="10"/></svg>
<svg class="a" style="left:1910.6px;top:530.32px" width="20" height="20" viewBox="0 0 20 20"><circle cx="10" cy="10" r="9.1" fill="none" stroke="#888" stroke-width="1.2"/><path d="M6.4 13.6L13.8 6.3M6.6 6.3H13.9V13.5" fill="none" stroke="#888" stroke-width="1.2"/></svg>
<div class="t" style="left:1595.7px;top:539.28px;font-size:16px;color:#5a5a5a;font-weight:400;">Unrecognized Patient Allergies</div>
<svg class="a" style="left:1565.3px;top:573.18px" width="20" height="20" viewBox="0 0 20 20"><path d="M10.20 2.80L12.29 7.03L16.95 7.71L13.58 11.00L14.37 15.64L10.20 13.45L6.03 15.64L6.82 11.00L3.45 7.71L8.11 7.03Z" fill="none" stroke="#5b93d6" stroke-width="1.25" stroke-miterlimit="10"/></svg>
<svg class="a" style="left:1910.6px;top:567.68px" width="20" height="20" viewBox="0 0 20 20"><circle cx="10" cy="10" r="9.1" fill="none" stroke="#888" stroke-width="1.2"/><path d="M6.4 13.6L13.8 6.3M6.6 6.3H13.9V13.5" fill="none" stroke="#888" stroke-width="1.2"/></svg>
<div class="t" style="left:1595.7px;top:576.64px;font-size:16px;color:#5a5a5a;font-weight:400;">Unsent Prescriptions</div>
<svg class="a" style="left:1709px;top:509px" width="20" height="26" viewBox="0 0 20 26"><path d="M6.5 13V2.5C6.5 1.5 8 1.5 8 2.5V11M8 11V9.5C8 8.5 9.6 8.5 9.6 9.5V11.5M9.6 11V10C9.6 9 11.2 9 11.2 10V12M11.2 11.5V10.8C11.2 9.8 12.8 9.8 12.8 10.8V16C12.8 21 11 24 7.5 24C4.5 24 3.5 22 2 19L0.8 16.5C0.3 15.3 1.8 14.3 2.7 15.4L6.5 19" fill="#fff" stroke="#000" stroke-width="0.9"/></svg>
<div class="a" style="left:2028px;top:0;width:20px;height:774px;background:#fafafa"></div>
<svg class="a" style="left:2031px;top:4px" width="15" height="11" viewBox="0 0 15 11"><path d="M7.5 1L14 10H1Z" fill="#a3a3a3" stroke="#a3a3a3" stroke-width="1" stroke-linejoin="round"/></svg>
<div class="a" style="left:2032.5px;top:23px;width:11.5px;height:115px;border-radius:6px;background:#a3a3a3"></div>
<svg class="a" style="left:11px;top:9.3px" width="55" height="55" viewBox="0 0 55 55"><path d="M26.26 0.02L27.57 6.00L32.02 4.31L39.88 3.16L38.02 9.00L42.72 9.76L50.10 12.69L45.57 16.82L49.26 19.83L54.18 26.06L48.20 27.37L49.89 31.82L51.04 39.68L45.20 37.82L44.44 42.52L41.51 49.90L37.38 45.37L34.37 49.06L28.14 53.98L26.83 48.00L22.38 49.69L14.52 50.84L16.38 45.00L11.68 44.24L4.30 41.31L8.83 37.18L5.14 34.17L0.22 27.94L6.20 26.63L4.51 22.18L3.36 14.32L9.20 16.18L9.96 11.48L12.89 4.10L17.02 8.63L20.03 4.94Z" fill="#eecb36" stroke="#eecb36" stroke-width="0.6" stroke-linejoin="round"/><path d="M27.57 6.00L27.20 11.50L23.86 9.82Z" fill="#d8a82c"/><path d="M38.02 9.00L34.95 13.58L32.90 10.45Z" fill="#d8a82c"/><path d="M45.57 16.82L40.62 19.25L40.41 15.52Z" fill="#d8a82c"/><path d="M48.20 27.37L42.70 27.00L44.38 23.66Z" fill="#d8a82c"/><path d="M45.20 37.82L40.62 34.75L43.75 32.70Z" fill="#d8a82c"/><path d="M37.38 45.37L34.95 40.42L38.68 40.21Z" fill="#d8a82c"/><path d="M26.83 48.00L27.20 42.50L30.54 44.18Z" fill="#d8a82c"/><path d="M16.38 45.00L19.45 40.42L21.50 43.55Z" fill="#d8a82c"/><path d="M8.83 37.18L13.78 34.75L13.99 38.48Z" fill="#d8a82c"/><path d="M6.20 26.63L11.70 27.00L10.02 30.34Z" fill="#d8a82c"/><path d="M9.20 16.18L13.78 19.25L10.65 21.30Z" fill="#d8a82c"/><path d="M17.02 8.63L19.45 13.58L15.72 13.79Z" fill="#d8a82c"/><circle cx="27.2" cy="27.0" r="15" fill="#fff"/></svg>
<div class="t" style="left:72.6px;top:13.04px;font-size:27px;color:#7d8288;transform:scaleX(0.925);transform-origin:0 0;-webkit-text-stroke:0.22px #fff">Enterprise</div>
<div class="t" style="left:72.6px;top:35.84px;font-size:27px;color:#7d8288;transform:scaleX(0.925);transform-origin:0 0;-webkit-text-stroke:0.22px #fff">Health</div>
<svg class="a" style="left:16px;top:548px" width="12" height="15" viewBox="0 0 12 15"><path d="M2 0.5H10V2H9V6.5L11 8.5V9.5H6.8V14.5H5.2V9.5H1V8.5L3 6.5V2H2Z" fill="#333"/></svg></body></html>
